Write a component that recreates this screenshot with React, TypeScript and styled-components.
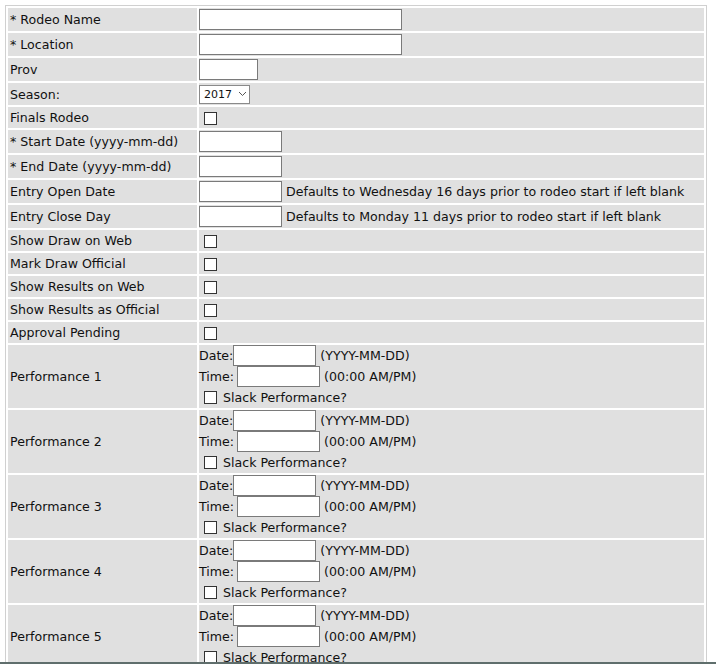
import styled, { createGlobalStyle } from "styled-components";

const GlobalStyle = createGlobalStyle`
  html, body {
    margin: 0;
    padding: 0;
    background: #ffffff;
  }
  body {
    padding: 5px 0 0 5px;
    font-family: "DejaVu Sans", Verdana, sans-serif;
    font-size: 12.6px;
    color: #111;
  }
`;

const FormTable = styled.table`
  width: 702px;
  border: 1px solid #d0d0d0;
  border-collapse: separate;
  border-spacing: 2px;
  background: #ffffff;
`;

const Row = styled.tr<{ $h?: number }>`
  height: ${({ $h }) => ($h ? `${$h}px` : "23px")};
`;

const Label = styled.td`
  box-sizing: border-box;
  width: 189px;
  background: #e0e0e0;
  padding: 0 0 0 2px;
  white-space: nowrap;
  vertical-align: middle;
`;

const Value = styled.td`
  background: #e0e0e0;
  padding: 0;
  white-space: nowrap;
  vertical-align: middle;
`;

const TextBox = styled.input<{ $w: number }>`
  box-sizing: border-box;
  width: ${({ $w }) => $w}px;
  height: 21px;
  margin: 0;
  padding: 1px 3px;
  border: 1px solid #7a7a7a;
  background: #fff;
  font: inherit;
  vertical-align: middle;
`;

const SelectBox = styled.div`
  box-sizing: border-box;
  display: inline-flex;
  align-items: center;
  gap: 6px;
  width: 51px;
  height: 19px;
  padding: 0 0 0 4px;
  border: 1px solid #8a8a8a;
  background: #fff;
  font-size: 11px;
  vertical-align: middle;
`;

const Box = styled.span`
  display: inline-block;
  box-sizing: border-box;
  width: 13px;
  height: 13px;
  margin: 0 0 0 5px;
  border: 1px solid #333;
  background: #fff;
  vertical-align: middle;
`;

const Hint = styled.span`
  margin-left: 4px;
  vertical-align: middle;
`;

const PerfBlock = styled.div`
  display: flex;
  flex-direction: column;
`;

const PerfLine = styled.div`
  display: flex;
  align-items: center;
  height: 21px;
`;

const PerfInput = styled.input<{ $ml: number }>`
  box-sizing: border-box;
  width: 83px;
  height: 21px;
  margin: 0 0 0 ${({ $ml }) => $ml}px;
  padding: 1px 3px;
  border: 1px solid #7a7a7a;
  background: #fff;
  font: inherit;
`;

const SlackBox = styled(Box)`
  margin: 0 6px 0 5px;
`;

const BottomRule = styled.div`
  position: fixed;
  left: 0;
  right: 0;
  bottom: 0;
  height: 2px;
  background: #5f6e6c;
`;

const Chevron = () => (
  <svg width="9" height="6" viewBox="0 0 9 6">
    <path d="M1 1l3.5 3.5L8 1" fill="none" stroke="#555" strokeWidth="1" />
  </svg>
);

const checkRows = [
  "Show Draw on Web",
  "Mark Draw Official",
  "Show Results on Web",
  "Show Results as Official",
  "Approval Pending",
];

function Performance({ n }: { n: number }) {
  return (
    <Row $h={63}>
      <Label>Performance {n}</Label>
      <Value>
        <PerfBlock>
          <PerfLine>
            Date:<PerfInput $ml={0} type="text" />
            <Hint>(YYYY-MM-DD)</Hint>
          </PerfLine>
          <PerfLine>
            Time:<PerfInput $ml={3} type="text" />
            <Hint>(00:00 AM/PM)</Hint>
          </PerfLine>
          <PerfLine>
            <SlackBox />
            Slack Performance?
          </PerfLine>
        </PerfBlock>
      </Value>
    </Row>
  );
}

export default function App() {
  return (
    <>
      <GlobalStyle />
      <FormTable>
        <tbody>
          <Row $h={23}>
            <Label>* Rodeo Name</Label>
            <Value>
              <TextBox $w={203} type="text" />
            </Value>
          </Row>
          <Row $h={23}>
            <Label>* Location</Label>
            <Value>
              <TextBox $w={203} type="text" />
            </Value>
          </Row>
          <Row $h={23}>
            <Label>Prov</Label>
            <Value>
              <TextBox $w={59} type="text" />
            </Value>
          </Row>
          <Row $h={22}>
            <Label>Season:</Label>
            <Value>
              <SelectBox>
                2017 <Chevron />
              </SelectBox>
            </Value>
          </Row>
          <Row $h={21}>
            <Label>Finals Rodeo</Label>
            <Value>
              <Box />
            </Value>
          </Row>
          <Row $h={23}>
            <Label>* Start Date (yyyy-mm-dd)</Label>
            <Value>
              <TextBox $w={83} type="text" />
            </Value>
          </Row>
          <Row $h={23}>
            <Label>* End Date (yyyy-mm-dd)</Label>
            <Value>
              <TextBox $w={83} type="text" />
            </Value>
          </Row>
          <Row $h={23}>
            <Label>Entry Open Date</Label>
            <Value>
              <TextBox $w={83} type="text" />
              <Hint>Defaults to Wednesday 16 days prior to rodeo start if left blank</Hint>
            </Value>
          </Row>
          <Row $h={23}>
            <Label>Entry Close Day</Label>
            <Value>
              <TextBox $w={83} type="text" />
              <Hint>Defaults to Monday 11 days prior to rodeo start if left blank</Hint>
            </Value>
          </Row>
          {checkRows.map((label) => (
            <Row key={label} $h={21}>
              <Label>{label}</Label>
              <Value>
                <Box />
              </Value>
            </Row>
          ))}
          {[1, 2, 3, 4, 5].map((n) => (
            <Performance key={n} n={n} />
          ))}
        </tbody>
      </FormTable>
      <BottomRule />
    </>
  );
}
